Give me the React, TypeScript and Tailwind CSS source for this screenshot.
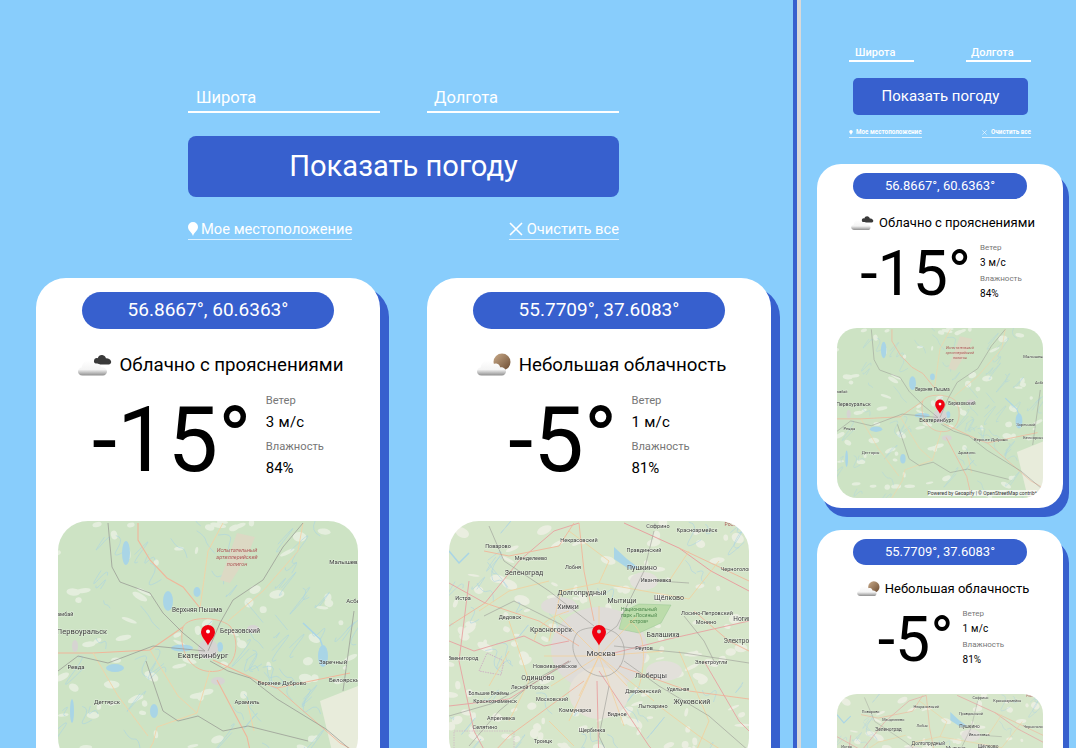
const BLUE = 'bg-[#3760ce]';

type Label = [string, number, number, number?];

function scatter(seed: number, count: number, big = 7) {
  let s = seed;
  const next = () => {
    s = (s * 16807) % 2147483647;
    return s / 2147483647;
  };
  const out: { x: number; y: number; a: number; b: number; r: number; c: number; d: number }[] = [];
  for (let i = 0; i < count; i++) {
    out.push({
      x: next() * 300,
      y: next() * 247,
      a: 1.5 + next() * big,
      b: 1 + next() * (big * 0.55),
      r: next() * 60 - 30,
      c: next() * 24 - 12,
      d: next() * 24 - 12,
    });
  }
  return out;
}

const ekbLabels: Label[] = [
  ['Первоуральск', 24, 113, 7.5],
  ['Екатеринбург', 145, 137, 8],
  ['Верхняя Пышма', 139, 91, 6.5],
  ['Березовский', 182, 112, 6.5],
  ['Ревда', 18, 148, 6],
  ['Дегтярск', 49, 183, 6],
  ['Арамиль', 189, 183, 6],
  ['Верхнее Дуброво', 224, 164, 6],
  ['Заречный', 275, 143, 6],
  ['Белоярский', 288, 161, 6],
  ['Малышева', 287, 43, 6],
  ['Асбест', 298, 82, 6],
  ['Гамбай', 6, 95, 5.5],
];

const mskLabels: Label[] = [
  ['Поварово', 49, 27, 5.5],
  ['Менделеево', 82, 39, 5.5],
  ['Зеленоград', 75, 54, 7],
  ['Некрасовский', 130, 21, 5.5],
  ['Правдинский', 195, 31, 5.5],
  ['Пушкино', 193, 49, 7],
  ['Ивантеевка', 207, 61, 5.5],
  ['Красноармейск', 248, 11, 5.5],
  ['Софрино', 209, 7, 5.5],
  ['Лобня', 124, 48, 5.5],
  ['Долгопрудный', 133, 74, 7],
  ['Мытищи', 173, 82, 7],
  ['Щёлково', 220, 79, 7],
  ['Химки', 119, 88, 7],
  ['Красногорск', 102, 111, 7],
  ['Дедовск', 61, 98, 5.5],
  ['Балашиха', 214, 116, 7],
  ['Москва', 152, 135, 8],
  ['Реутов', 195, 129, 5.5],
  ['Электроугли', 262, 143, 5.5],
  ['Электросталь', 296, 122, 6.5],
  ['Ногинск', 297, 100, 6.5],
  ['Монино', 257, 103, 5.5],
  ['Лосино-Петровский', 258, 94, 5.5],
  ['Черноголовка', 290, 50, 5.5],
  ['Новоивановское', 106, 147, 5.5],
  ['Одинцово', 89, 159, 7],
  ['Люберцы', 202, 157, 7],
  ['Дзержинский', 194, 172, 5.5],
  ['Удельная', 229, 170, 5],
  ['Жуковский', 243, 183, 7],
  ['Видное', 168, 195, 5.5],
  ['Лыткарино', 204, 187, 5.5],
  ['Коммунарка', 126, 191, 5.5],
  ['Московский', 103, 180, 5.5],
  ['Щербинка', 143, 211, 5.5],
  ['Апрелевка', 52, 199, 5.5],
  ['Троицк', 94, 222, 5.5],
  ['Селятино', 36, 208, 5.5],
  ['Краснознаменск', 46, 182, 5.5],
  ['Большие Вязёмы', 40, 174, 5],
  ['Лесной Городок', 81, 168, 5],
  ['Звенигород', 14, 139, 5.5],
  ['Истра', 14, 79, 5.5],
];

function EkbMap() {
  return (
    <>
      <rect width="300" height="247" fill="#cde3c4" />
      {scatter(77, 90).map((p, i) => (
        <ellipse key={i} cx={p.x} cy={p.y} rx={p.a} ry={p.b} transform={`rotate(${p.r} ${p.x} ${p.y})`} fill="#e4eedd" />
      ))}
      {scatter(311, 70).map((p, i) => (
        <path key={i} d={`M${p.x} ${p.y}q${p.c} ${p.d} ${p.d} ${p.c * 1.5}t${p.c} ${p.d}`} fill="none" stroke="#a9d3e2" strokeWidth="0.6" />
      ))}
      <path d="M262 180L300 165V247H278Z" fill="#e8ecdb" />
      <path d="M162 59L179 12L197 16L189 36L172 62Z" fill="#dcd9c4" />
      <g fill="#a9d5e6">
        <ellipse cx="68" cy="32" rx="4" ry="12" />
        <ellipse cx="110" cy="80" rx="5" ry="10" />
        <ellipse cx="139" cy="71" rx="3.500" ry="5" />
        <ellipse cx="124" cy="127" rx="11" ry="3.500" />
        <ellipse cx="162" cy="126" rx="3" ry="5" />
        <ellipse cx="265" cy="135" rx="5" ry="11" />
        <ellipse cx="57" cy="147" rx="9" ry="4" />
        <ellipse cx="96" cy="190" rx="4" ry="7" />
        <ellipse cx="14" cy="190" rx="2" ry="12" />
      </g>
      <path d="M245 102L262 118L268 135" fill="none" stroke="#a9d5e6" strokeWidth="1.5" />
      <g fill="#d6d4d2">
        <ellipse cx="150" cy="128" rx="10" ry="10" />
        <ellipse cx="17" cy="125" rx="3" ry="6" />
        <ellipse cx="195" cy="108" rx="6" ry="4" />
        <ellipse cx="160" cy="160" rx="7" ry="4" />
      </g>
      <g fill="none" stroke="#f0b69a" strokeWidth="0.9">
        <path d="M80 2L80 19L92 39L109 57L125 66L142 87" strokeWidth="1.1" />
        <path d="M0 132L35 132L92 129L125 106" strokeWidth="1.1" />
        <path d="M155 139L205 162L219 167L292 152" strokeWidth="1.1" />
        <path d="M125 106C130 95 160 95 172 105C182 120 180 145 160 150C130 155 120 125 125 106Z" />
        <path d="M159 159L189 216L196 247" strokeWidth="1.1" />
        <path d="M219 167L282 222L300 232" />
      </g>
      <g fill="none" stroke="#f2d3a6" strokeWidth="0.9">
        <path d="M165 2L150 30L142 87" />
        <path d="M245 2L240 30L205 70L170 100" />
        <path d="M92 129L120 175L139 192" />
        <path d="M152 149L139 192L99 206L95 222L80 247" />
        <path d="M35 132L60 175L90 215" />
        <path d="M189 180L196 210" />
      </g>
      <g fill="none" stroke="#93938f" strokeWidth="0.7">
        <path d="M50 2L54 46L62 61L92 72L105 92L125 112L147 130" />
        <path d="M245 2L225 26L205 59L175 79L162 102L150 130" />
        <path d="M0 150L20 135L50 142L95 125L147 130" />
        <path d="M152 140L170 150L192 157L219 178L268 208L300 235" />
        <path d="M88 140L105 190L120 200L140 195L165 210L190 205L250 220" />
        <path d="M296 90L285 170" />
      </g>
      <text x="179" y="31" fontSize="5.500" fontStyle="italic" fill="#b05a5a" textAnchor="middle">Испытательный</text>
      <text x="179" y="38" fontSize="5.500" fontStyle="italic" fill="#b05a5a" textAnchor="middle">артиллерийский</text>
      <text x="179" y="45" fontSize="5.500" fontStyle="italic" fill="#b05a5a" textAnchor="middle">полигон</text>
    </>
  );
}

function MskMap() {
  return (
    <>
      <rect width="300" height="247" fill="#d6e6ca" />
      {scatter(911, 150).map((p, i) => (
        <ellipse key={i} cx={p.x} cy={p.y} rx={p.a} ry={p.b} transform={`rotate(${p.r} ${p.x} ${p.y})`} fill="#eaeee0" />
      ))}
      {scatter(523, 50).map((p, i) => (
        <path key={i} d={`M${p.x} ${p.y}q${p.c} ${p.d} ${p.d} ${p.c * 1.5}t${p.c} ${p.d}`} fill="none" stroke="#add3e2" strokeWidth="0.6" />
      ))}
      <ellipse cx="150" cy="128" rx="48" ry="42" fill="#dfdcd8" />
      <ellipse cx="150" cy="172" rx="30" ry="26" fill="#e6e1d8" />
      <ellipse cx="110" cy="85" rx="18" ry="9" fill="#dfdcd8" />
      <ellipse cx="195" cy="60" rx="14" ry="9" fill="#e2e0da" />
      <ellipse cx="215" cy="150" rx="18" ry="10" fill="#e2e0da" />
      <path d="M170 108L175 90L190 83L222 84L212 102L190 112Z" fill="#bcdcab" stroke="#8cc088" strokeWidth="0.4" />
      <path d="M165 26L178 38L190 47L180 48L165 38Z" fill="#a9d5e6" />
      <path d="M0 30L10 42L20 32" fill="none" stroke="#a9d5e6" strokeWidth="1.5" />
      <path d="M30 150L38 132L55 140L52 154Z" fill="none" stroke="#c89cc0" strokeWidth="0.7" strokeDasharray="1.5 1" />
      <path d="M5 235V210H65V247" fill="none" stroke="#c89cc0" strokeWidth="0.5" strokeDasharray="1.5 1" />
      <g fill="none" stroke="#f0b69a" strokeWidth="0.9">
        <path d="M175 2L230 27L262 50L300 70" stroke="#e8a0a0" strokeWidth="1" />
        <path d="M0 62L36 82L70 40L105 10L130 2" stroke="#e8a0a0" />
        <path d="M0 105L36 82L90 100L130 125" />
        <path d="M0 185L60 178L120 140" stroke="#e8a0a0" />
        <path d="M0 120L25 130L75 115L95 125L120 120" stroke="#e8a0a0" />
        <path d="M165 132L220 118L300 100" stroke="#e8a0a0" />
        <path d="M170 145L240 170L300 178" />
        <path d="M150 150L200 225L220 247" stroke="#e8a0a0" />
        <path d="M135 160L60 215L30 247" />
        <path d="M148 160L150 247" stroke="#e8a0a0" />
        <path d="M35 30L60 35L110 25L125 2" />
        <path d="M130 2L135 50L145 100" />
        <path d="M230 27L300 60" />
        <path d="M255 140L290 200L300 210" stroke="#e8a0a0" />
        <path d="M20 60L10 140L25 210L45 247" stroke="#e8a0a0" />
        <path d="M245 90L280 120L300 130" />
      </g>
      <g fill="none" stroke="#f2cf9c" strokeWidth="0.8">
        <path d="M100 120L112 70L150 62L195 70" />
        <path d="M195 70L240 78L270 40" />
        <path d="M150 135L110 95M150 135L188 95M150 135L102 165M150 135L205 180M150 135L120 200M150 135L175 205M150 135L215 130M150 135L95 135M150 135L150 85M150 135L130 175M150 135L178 165" />
        <path d="M60 100L80 160L60 200" />
        <path d="M230 130L260 200L240 247" />
        <path d="M210 185L250 215L290 240" />
        <path d="M30 90L60 70L100 60" />
        <path d="M85 120C90 100 105 95 120 90M180 100C200 110 195 150 190 165" />
        <path d="M120 10L160 40L150 62M240 30L220 60M60 130L40 165M100 200L125 225" />
      </g>
      <g fill="none" stroke="#9a9a96" strokeWidth="0.6">
        <path d="M128 112C135 104 165 104 172 118C180 132 172 148 164 152C154 160 138 152 132 145C122 132 122 122 128 112Z" />
        <path d="M40 5L55 40L100 70L145 105" />
        <path d="M205 10L195 50L168 105L155 115" />
        <path d="M165 125L235 132L300 142" />
        <path d="M175 140L210 165L260 195L300 230" />
        <path d="M160 165L150 215L165 247" />
        <path d="M122 140L80 165L50 190L20 225" />
        <path d="M0 195L45 182L120 140" />
        <path d="M125 110L65 80L35 95" />
        <path d="M235 95L255 120L265 140" />
        <path d="M210 60L240 62" />
      </g>
      <text x="190" y="90" fontSize="5" fill="#4f8a4f" textAnchor="middle">Национальный</text>
      <text x="190" y="96" fontSize="5" fill="#4f8a4f" textAnchor="middle">парк «Лосиный</text>
      <text x="190" y="102" fontSize="5" fill="#4f8a4f" textAnchor="middle">остров»</text>
      <text x="284" y="5" fontSize="5" fill="#b05a5a" textAnchor="middle">Россия</text>
    </>
  );
}

function CityMap({ city, attribution }: { city: 'ekb' | 'msk'; attribution?: boolean }) {
  const labels = city === 'ekb' ? ekbLabels : mskLabels;
  return (
    <div className="relative h-full w-full overflow-hidden">
      <svg viewBox="0 0 300 247" className="block h-full w-full blur-[0.5px]" preserveAspectRatio="none">
        {city === 'ekb' ? <EkbMap /> : <MskMap />}
        {labels.map(([t, x, y, size]) => (
          <text
            key={t}
            x={x}
            y={y}
            fontSize={size}
            fill="#3d3d3d"
            textAnchor="middle"
            stroke="#ffffff"
            strokeOpacity="0.4"
            strokeWidth="1"
            paintOrder="stroke"
          >
            {t}
          </text>
        ))}
        <path d="M150 124.500c-1.400-4-7-8.500-7-13.500a7 7 0 0 1 14 0c0 5-5.600 9.500-7 13.500z" fill="#f00010" />
        <circle cx="150" cy="110.500" r="2" fill={city === 'ekb' ? '#ffffff' : '#c9c9c9'} />
      </svg>
      {attribution && (
        <div className="absolute right-[6px] bottom-[2px] bg-white/70 text-[5px] leading-[6px] whitespace-nowrap text-[#333]">
          Powered by Geoapify | © OpenStreetMap contrib*
        </div>
      )}
    </div>
  );
}

function CloudIcon({ kind, className }: { kind: 'dark' | 'sun'; className: string }) {
  const id = `cl-${kind}-${className.length}`;
  return (
    <svg viewBox="0 0 34 24" className={className}>
      <defs>
        <linearGradient id={id} x1="0" y1="0" x2="0" y2="1">
          <stop offset="0" stopColor="#ffffff" />
          <stop offset="0.6" stopColor="#f4f4f4" />
          <stop offset="1" stopColor="#8f8f8f" />
        </linearGradient>
        <linearGradient id={`${id}-s`} x1="0" y1="0" x2="1" y2="1">
          <stop offset="0" stopColor="#c9ab8a" />
          <stop offset="1" stopColor="#6b4a30" />
        </linearGradient>
      </defs>
      {kind === 'dark' ? (
        <path
          d="M16 8c0-2.500 2-3.500 3.800-2.800C20.500 2.800 22.500 1.600 25 2.200c1.800.5 2.800 1.800 3 3.200 1.800-.3 4 .6 5 2.600 .6 1.600-.4 3.200-2 3.400H22C18 11.400 15.500 10 16 8z"
          fill="#3a3a3a"
        />
      ) : (
        <circle cx="25" cy="9" r="8.500" fill={`url(#${id}-s)`} />
      )}
      <path
        d="M4.500 22.500C1.500 22.500 0 20.500 0 18.500c0-2.200 1.700-3.800 3.800-3.900C4 10.500 7 7.500 10.500 7.500c2.500 0 4.700 1.300 5.800 3.500 1-.5 2-.7 3-.5 2.200.4 3.600 2 3.800 3.800 2.900-.5 5.900 1.300 5.900 4.300 0 2.400-1.800 3.900-4 3.900z"
        fill={`url(#${id})`}
      />
    </svg>
  );
}

function PinIcon({ className }: { className: string }) {
  return (
    <svg viewBox="0 0 10 14" className={className}>
      <path d="M5 14C4 10.500 0 8.500 0 5a5 5 0 0 1 10 0c0 3.500-4 5.500-5 9z" fill="#ffffff" />
    </svg>
  );
}

function CrossIcon({ className }: { className: string }) {
  return (
    <svg viewBox="0 0 14 14" className={className}>
      <path d="M1 1L13 13M13 1L1 13" stroke="#ffffff" strokeWidth="1.6" fill="none" />
    </svg>
  );
}

type Weather = {
  coords: string;
  kind: 'dark' | 'sun';
  text: string;
  temp: string;
  wind: string;
  hum: string;
  city: 'ekb' | 'msk';
};

const ekb: Weather = { coords: '56.8667°, 60.6363°', kind: 'dark', text: 'Облачно с прояснениями', temp: '-15°', wind: '3 м/с', hum: '84%', city: 'ekb' };
const msk: Weather = { coords: '55.7709°, 37.6083°', kind: 'sun', text: 'Небольшая облачность', temp: '-5°', wind: '1 м/с', hum: '81%', city: 'msk' };

function BigCard({ w }: { w: Weather }) {
  return (
    <div className="w-[344px] shrink-0 rounded-[30px] bg-white px-[22px] pt-[14px] pb-[30px] shadow-[9px_9px_0_#3760ce]">
      <div className={`mx-auto flex h-[37px] w-[252px] items-center justify-center rounded-[19px] ${BLUE} text-[19px] text-white`}>
        {w.coords}
      </div>
      <div className="mt-[21px] flex h-[30px] items-center justify-center gap-[8px] pl-[5px] text-[18.700px] whitespace-nowrap text-black">
        <CloudIcon kind={w.kind} className="h-[24px] w-[34px]" />
        <span>{w.text}</span>
      </div>
      <div className="mt-[14px] flex h-[112px] items-start justify-center gap-[14px]">
        <div className="text-[90px] leading-[94px] text-black">{w.temp}</div>
        <div>
          <div className="text-[11.200px] leading-[14px] text-[#777]">Ветер</div>
          <div className="mt-[5px] text-[15px] leading-[18px] tracking-[0.3px] text-black">{w.wind}</div>
          <div className="mt-[9px] text-[11.200px] leading-[14px] text-[#777]">Влажность</div>
          <div className="mt-[5px] text-[15px] leading-[18px] text-black">{w.hum}</div>
        </div>
      </div>
      <div className="mt-[15px] h-[247px] w-[300px] overflow-hidden rounded-[30px]">
        <CityMap city={w.city} attribution />
      </div>
    </div>
  );
}

function SmallCard({ w }: { w: Weather }) {
  return (
    <div className="w-[246px] shrink-0 rounded-[24px] bg-white px-[20px] pt-[9px] pb-[10px] shadow-[6px_9px_0_#3760ce]">
      <div className={`mx-auto flex h-[26px] w-[174px] items-center justify-center rounded-[13px] ${BLUE} text-[13px] text-white`}>
        {w.coords}
      </div>
      <div className="mt-[14px] flex h-[20px] items-center justify-center gap-[5px] pl-[6px] text-[13px] whitespace-nowrap text-black">
        <CloudIcon kind={w.kind} className="h-[16px] w-[23px]" />
        <span>{w.text}</span>
      </div>
      <div className="mt-[10px] flex h-[73px] items-start justify-center gap-[9px] pl-[2px]">
        <div className="text-[62.500px] leading-[62px] text-black">{w.temp}</div>
        <div>
          <div className="text-[8px] leading-[10px] text-[#777]">Ветер</div>
          <div className="mt-[4px] text-[10px] leading-[12px] tracking-[0.2px] text-black">{w.wind}</div>
          <div className="mt-[5px] text-[8px] leading-[10px] text-[#777]">Влажность</div>
          <div className="mt-[4px] text-[10px] leading-[12px] text-black">{w.hum}</div>
        </div>
      </div>
      <div className="mt-[12px] h-[170px] w-[206px] overflow-hidden rounded-[20px]">
        <CityMap city={w.city} attribution />
      </div>
    </div>
  );
}

export default function App() {
  return (
    <div className="flex h-[748px] w-full overflow-hidden bg-[#88cdfc] font-['Roboto',sans-serif]">
      {/* широкий вариант */}
      <div className="w-[793px] shrink-0 pl-[36px]">
        <div className="ml-[152px] w-[431px] pt-[81px]">
          <div className="flex justify-between">
            <input
              placeholder="Широта"
              className="h-[32px] w-[192px] border-b-2 border-white bg-transparent pt-[2px] pl-[8px] text-[16.500px] text-white outline-none placeholder:text-white"
            />
            <input
              placeholder="Долгота"
              className="h-[32px] w-[192px] border-b-2 border-white bg-transparent pt-[2px] pl-[7px] text-[16.500px] text-white outline-none placeholder:text-white"
            />
          </div>
          <button className={`mt-[23px] block h-[61px] w-full rounded-[8px] ${BLUE} text-[29.100px] text-white`}>
            Показать погоду
          </button>
          <div className="mt-[22px] flex justify-between text-[14.700px] leading-[20px] text-white">
            <a className="flex items-center gap-[3px] border-b border-white/70">
              <PinIcon className="h-[14px] w-[10px]" />
              Мое местоположение
            </a>
            <a className="flex items-center gap-[4px] border-b border-white/70">
              <CrossIcon className="h-[14px] w-[14px]" />
              Очистить все
            </a>
          </div>
        </div>
        <div className="mt-[38px] flex gap-[47px]">
          <BigCard w={ekb} />
          <BigCard w={msk} />
        </div>
      </div>

      <div className="h-full w-[4px] shrink-0 bg-[#3760ce]" />
      <div className="h-full w-[4px] shrink-0 bg-[#d9d9d9]" />

      {/* узкий вариант */}
      <div className="w-[275px] shrink-0">
        <div className="ml-[48px] w-[182px] pt-[44px]">
          <div className="flex justify-between">
            <input
              placeholder="Широта"
              className="h-[18px] w-[65px] border-b-2 border-white bg-transparent pl-[6px] text-[11px] font-medium text-white outline-none placeholder:text-white"
            />
            <input
              placeholder="Долгота"
              className="h-[18px] w-[65px] border-b-2 border-white bg-transparent pl-[5px] text-[11px] font-medium text-white outline-none placeholder:text-white"
            />
          </div>
          <button className={`mt-[16px] ml-[4px] block h-[37px] w-[175px] rounded-[5px] ${BLUE} text-[15px] text-white`}>
            Показать погоду
          </button>
          <div className="mt-[13px] flex justify-between text-[6.300px] leading-[8px] font-bold text-white">
            <a className="flex items-center gap-[3px] border-b border-white/70 pb-[1px]">
              <PinIcon className="h-[5px] w-[4px]" />
              Мое местоположение
            </a>
            <a className="flex items-center gap-[4px] border-b border-white/70 pb-[1px]">
              <CrossIcon className="h-[5px] w-[5px]" />
              Очистить все
            </a>
          </div>
        </div>
        <div className="mt-[26px] ml-[16px] flex flex-col gap-[22px]">
          <SmallCard w={ekb} />
          <SmallCard w={msk} />
        </div>
      </div>
    </div>
  );
}
